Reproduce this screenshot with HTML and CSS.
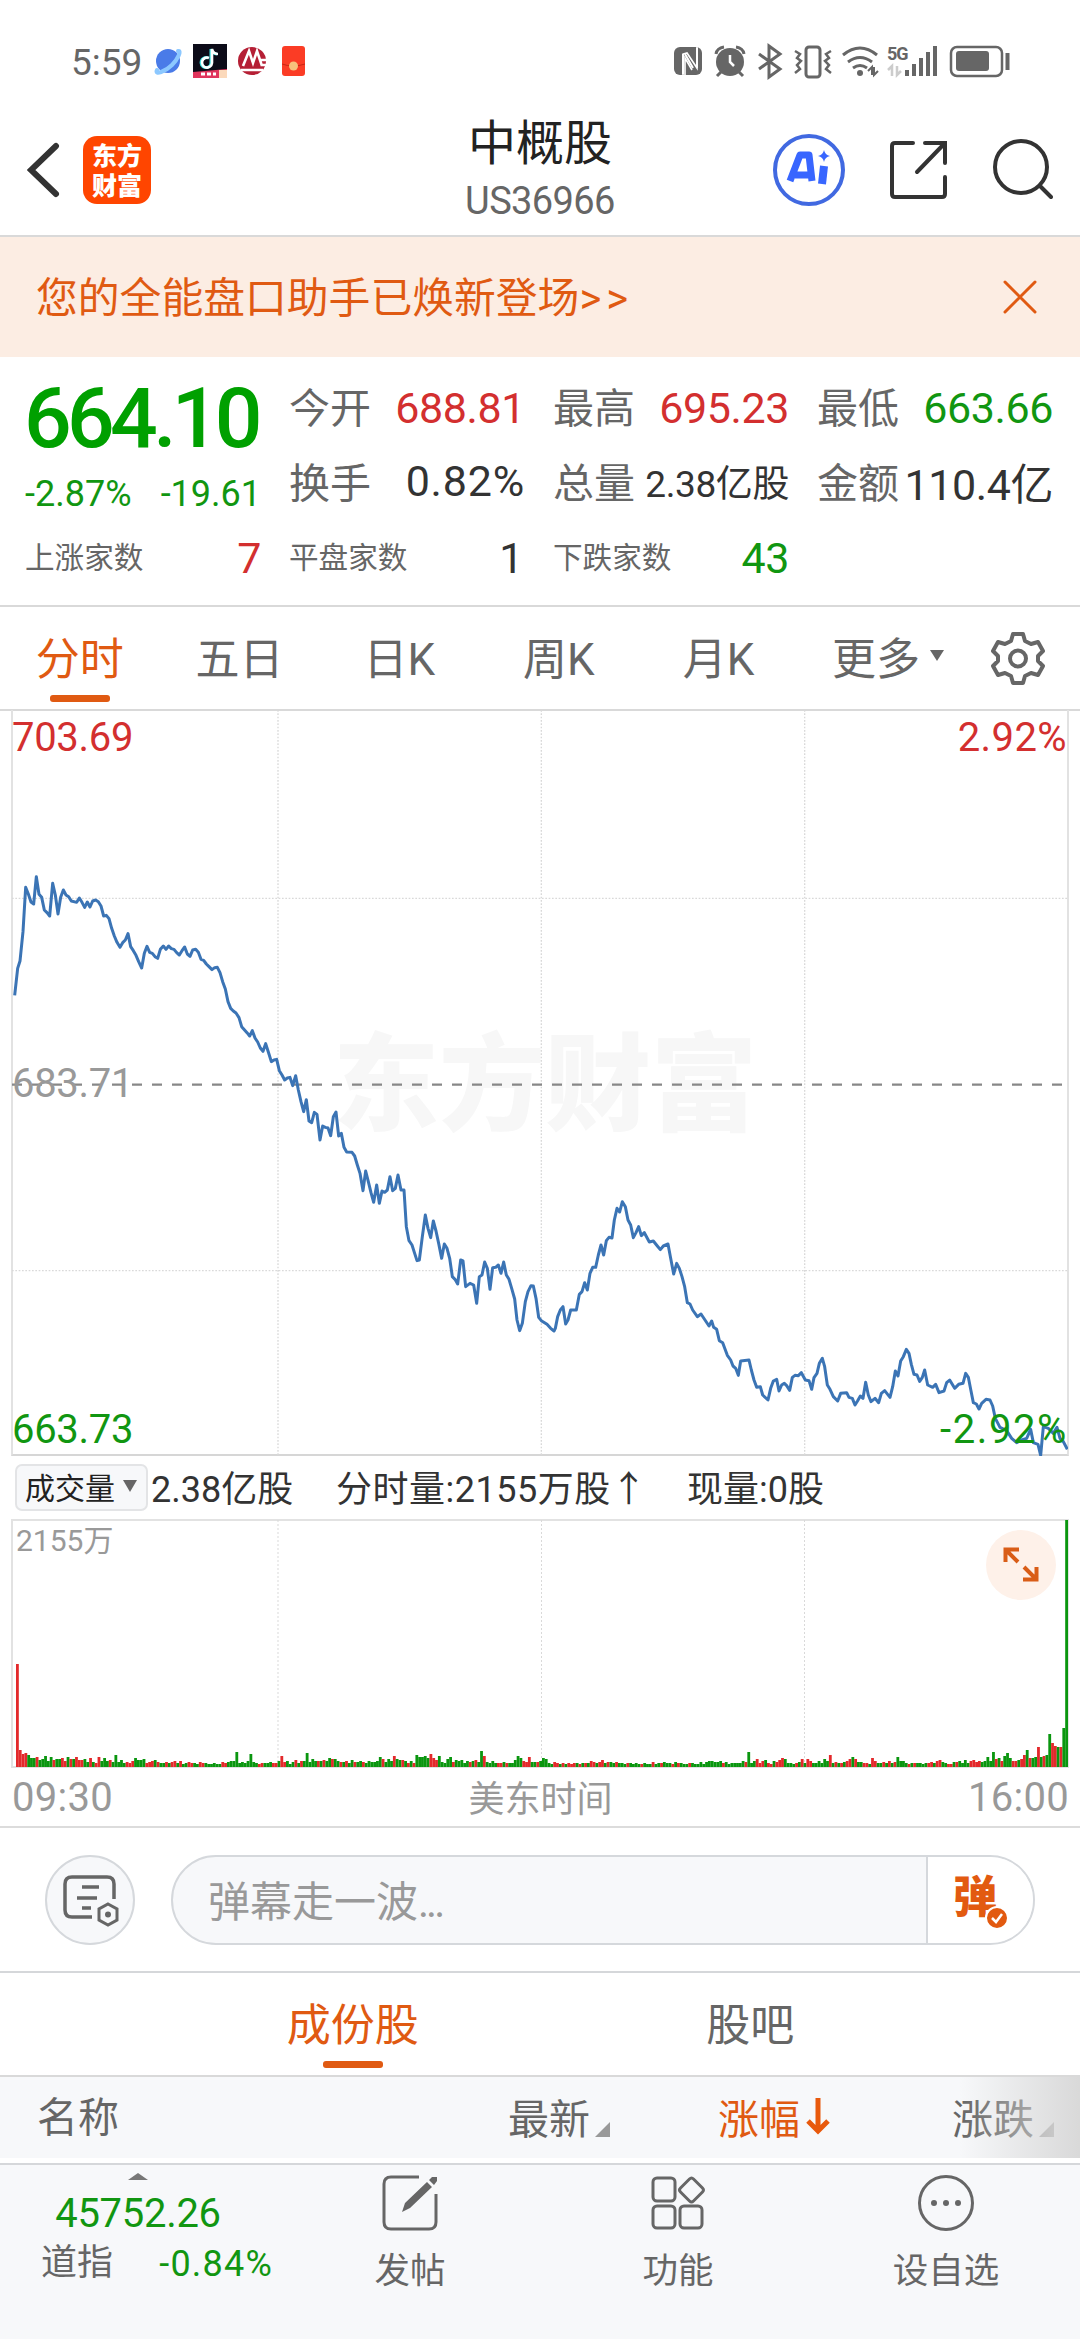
FILE: index.html
```
<!DOCTYPE html>
<html lang="zh-CN">
<head>
    <meta charset="UTF-8">
    <meta name="viewport" content="width=device-width, initial-scale=1.0">
    <title>中概股 US36966</title>
    <link rel="stylesheet" href="styles.css">
</head>
<body>
    <div class="status-bar">
        <span class="clock">5:59</span>
        <svg class="status-left" width="160" height="40" viewBox="150 42 160 40">
            <circle cx="168" cy="61" r="12" fill="#4a7be8"/>
            <path d="M157 70C154 76 166 71 172 65S182 50 178 51" fill="none" stroke="#8cc8ff" stroke-width="4" stroke-linecap="round"/>
            <rect x="193" y="44" width="34" height="34" fill="#0c0b18"/>
            <path d="M208 58a5 5 0 1 0 3 5V49c1 4 3 5 6 5" fill="none" stroke="#3de0e0" stroke-width="3"/>
            <path d="M209 58a5 5 0 1 0 3 5V49c1 4 3 5 6 5" fill="none" stroke="#fff" stroke-width="2.6"/>
            <path d="M193 72l34-3v9h-34z" fill="#e0345c"/>
            <path d="M219 70h8v8h-8z" fill="#fbd9bb"/>
            <path d="M201 74h15" stroke="#fff" stroke-width="3" stroke-dasharray="4 2"/>
            <circle cx="252" cy="61" r="14" fill="#b51f35"/>
            <path d="M243 66l6-15 4 12 4-12 5 15M241 70h22M260 60h6M261 65h5" fill="none" stroke="#fff" stroke-width="2.6"/>
            <rect x="282" y="46" width="23" height="30" rx="3" fill="#fb3c25"/>
            <path d="M282 64q11 4 23 0" fill="none" stroke="#c82512"/>
            <circle cx="293.500" cy="66" r="4.500" fill="#f7c27c"/>
        </svg>
        <svg class="status-right" width="340" height="40" viewBox="672 42 340 40">
            <rect x="674" y="47" width="28" height="28" rx="6" fill="#666"/>
            <path d="M683 75V54l4-1 10 15V47M692 70l-7-12v17" fill="none" stroke="#fff" stroke-width="1.600"/>
            <path d="M685 54l8 14M683 74V54M697 68V48" stroke="#fff" stroke-width="2"/>
            <circle cx="730" cy="62" r="14" fill="#666"/>
            <path d="M716 54q1-6 8-7M744 54q-1-6-8-7M721 72l-4 4M739 72l4 4" fill="none" stroke="#666" stroke-width="3"/>
            <path d="M730 55v7l4 4" fill="none" stroke="#fff" stroke-width="2.500"/>
            <path d="M759 54l21 15-11 8V46l11 8-21 15" fill="none" stroke="#666" stroke-width="3"/>
            <rect x="806" y="47" width="14" height="30" rx="3" fill="none" stroke="#666" stroke-width="3"/>
            <path d="M795 51l5 3-3 4 4 3-4 4 3 4-5 4M831 51l-5 3 3 4-4 3 4 4-3 4 5 4" fill="none" stroke="#666" stroke-width="2.500"/>
            <path d="M843 55q17-14 34 0M848 62q12-9 24 0M853 68q7-5 14 0" fill="none" stroke="#666" stroke-width="3"/>
            <circle cx="860" cy="73" r="3" fill="#666"/>
            <path d="M868 71l4-4v8M874 67v8l4-4" fill="none" stroke="#666" stroke-width="2"/>
            <text x="887" y="60" class="net">5G</text>
            <path d="M888 70l4-4v10M897 66v9l4-4" fill="none" stroke="#ccc" stroke-width="2.500"/>
            <path d="M907 70v6M914 64v12M921 58v18M928 52v24M935 46v30" stroke="#666" stroke-width="4" fill="none"/>
            <rect x="951" y="47" width="51" height="29" rx="6" fill="none" stroke="#666" stroke-width="2.500"/>
            <rect x="956" y="51" width="33" height="20" rx="3" fill="#666"/>
            <path d="M1007.500 53v17" stroke="#666" stroke-width="4"/>
        </svg>
    </div>

    <header class="nav">
        <svg class="back" width="34" height="60" viewBox="0 0 34 60"><path d="M29 6L4 30l25 24" fill="none" stroke="#333" stroke-width="6" stroke-linecap="round"/></svg>
        <div class="logo">东方<br>财富</div>
        <div class="title">
            <h1>中概股</h1>
            <p>US36966</p>
        </div>
        <div class="nav-icons">
            <svg width="72" height="74" viewBox="0 0 72 74">
                <circle cx="36" cy="37" r="34" fill="none" stroke="#4169e1" stroke-width="4"/>
                <path d="M17 48l10-26h9l3 26M22 42h15" fill="none" stroke="#3866ff" stroke-width="7" stroke-linejoin="round"/>
                <path d="M51 33l-2 18" stroke="#3866ff" stroke-width="8"/>
                <path d="M51 17q1 5 6 6-5 1-6 6-1-5-6-6 5-1 6-6z" fill="#3866ff"/>
            </svg>
            <svg width="60" height="62" viewBox="0 0 60 62"><path d="M24 4H6q-3 0-3 3v48q0 3 3 3h47q3 0 3-3V38M36 4h20v20M55 5L28 33" fill="none" stroke="#333" stroke-width="4" stroke-linecap="round"/></svg>
            <svg width="60" height="62" viewBox="0 0 60 62"><circle cx="28" cy="28" r="26" fill="none" stroke="#333" stroke-width="4"/><path d="M47 47l11 11" stroke="#333" stroke-width="4" stroke-linecap="round"/></svg>
        </div>
    </header>

    <div class="banner">
        <p>您的全能盘口助手已焕新登场<span>&gt;&gt;</span></p>
        <svg width="34" height="34" viewBox="0 0 34 34"><path d="M2 2l30 30M32 2L2 32" stroke="#e05a12" stroke-width="3" stroke-linecap="round"/></svg>
    </div>

    <section class="quote">
        <div class="price">
            <strong>664.10</strong>
            <div class="change"><span>-2.87%</span><span>-19.61</span></div>
        </div>
        <div class="cell"><label>今开</label><b class="up">688.81</b></div>
        <div class="cell"><label>最高</label><b class="up">695.23</b></div>
        <div class="cell"><label>最低</label><b class="down">663.66</b></div>
        <div class="cell"><label>换手</label><b class="wide">0.82%</b></div>
        <div class="cell"><label>总量</label><b class="tight">2.38亿股</b></div>
        <div class="cell"><label>金额</label><b>110.4亿</b></div>
        <div class="cell small"><label>上涨家数</label><b class="up">7</b></div>
        <div class="cell small"><label>平盘家数</label><b>1</b></div>
        <div class="cell small"><label>下跌家数</label><b class="down">43</b></div>
    </section>

    <nav class="periods">
        <a class="active">分时</a>
        <a>五日</a>
        <a>日K</a>
        <a>周K</a>
        <a>月K</a>
        <a class="more">更多<i></i></a>
        <svg width="54" height="54" viewBox="0 0 54 54"><path d="M22 3h10l2 7 6 3 7-2 5 9-5 5v5l5 5-5 9-7-2-6 3-2 7H22l-2-7-6-3-7 2-5-9 5-5v-5l-5-5 5-9 7 2 6-3z" fill="none" stroke="#666" stroke-width="4" stroke-linejoin="round"/><circle cx="27" cy="27.500" r="8" fill="none" stroke="#666" stroke-width="4"/></svg>
    </nav>

    <section class="chart">
        <div class="watermark">东方财富</div>
        <!-- three units per pixel -->
        <svg class="line" width="1056" height="746" viewBox="36 -390 3168 2238">
            <path class="grid" d="M834-390V1848M1624-390V1848M2414-390V1848M36 175H3204M36 1292H3204"/>
            <path d="M36 734H3204" stroke="#888" stroke-width="7" stroke-dasharray="30"/>
            <polyline class="trend" points="44,466 53,385 60,363 69,275 77,142 85,162 93,186 101,192 109,110 117,163 125,172 133,210 141,218 149,228 158,130 166,165 174,222 182,172 190,150 198,165 206,170 214,183 230,187 238,174 246,187 254,202 262,186 270,201 278,183 287,180 295,185 303,198 311,228 319,226 327,236 335,265 343,288 351,307 360,322 368,308 376,300 384,281 392,320 400,332 408,346 416,365 425,384 433,340 441,319 449,337 457,340 465,350 473,355 481,328 490,318 498,328 506,318 514,326 522,328 530,338 538,345 546,332 554,321 562,342 570,349 578,330 587,328 595,337 603,358 611,361 619,372 627,380 636,389 644,383 652,382 660,398 668,425 676,447 684,485 692,505 700,513 708,519 717,533 725,560 733,569 741,578 749,588 757,572 765,594 773,606 781,624 789,634 797,611 805,636 814,665 822,660 830,658 838,692 846,705 854,720 862,714 870,712 878,737 887,707 895,750 903,785 911,815 919,779 927,843 935,848 943,817 951,823 960,900 968,858 976,862 984,864 992,887 1000,830 1008,816 1016,888 1024,880 1032,922 1040,936 1056,937 1064,948 1072,975 1080,1000 1089,1052 1097,993 1105,1025 1113,1058 1121,1087 1130,1035 1138,1090 1146,1053 1154,1057 1162,1050 1170,1010 1178,1052 1186,1045 1194,1005
                1203,1050 1212,1050 1219,1160 1227,1202 1236,1215 1244,1240 1251,1262 1258,1260 1267,1190 1276,1125 1284,1165 1292,1193 1300,1143 1308,1173 1316,1210 1325,1255 1333,1212 1341,1225 1349,1255 1357,1310 1365,1318 1373,1332 1382,1260 1389,1263 1397,1340 1410,1330 1421,1335 1430,1390 1438,1310 1446,1305 1454,1266 1462,1285 1470,1348 1478,1283 1487,1282 1495,1275 1503,1300 1511,1266 1519,1305 1527,1318 1535,1345 1544,1377 1551,1440 1559,1472 1567,1450 1576,1385 1584,1355 1593,1337 1600,1338 1608,1375 1616,1432 1624,1442 1641,1453 1652,1465 1662,1473 1666,1465 1673,1430 1681,1410 1689,1400 1697,1452 1704,1440 1712,1410 1729,1410 1738,1363 1746,1355 1754,1328 1762,1350 1770,1300 1778,1282 1787,1282 1795,1245 1803,1215 1811,1245 1819,1202 1827,1192 1836,1194 1843,1140 1851,1105 1859,1116 1867,1085 1876,1100 1884,1140 1892,1155 1900,1193 1908,1178 1916,1160 1924,1187 1933,1178 1948,1206 1960,1203 1972,1218 1981,1229 1990,1218 2004,1212 2012,1255 2021,1302 2030,1270 2038,1285 2046,1310 2054,1340 2062,1388 2070,1392 2078,1410 2092,1430 2103,1422 2115,1440 2127,1458 2135,1443 2141,1462 2150,1468 2158,1502 2168,1508 2182,1546 2192,1560 2199,1578 2207,1585 2215,1606
                2222,1563 2247,1560 2254,1590 2262,1620 2270,1642 2281,1640 2288,1665 2304,1680 2312,1645 2320,1623 2330,1618 2337,1653 2345,1635 2353,1630 2360,1637 2369,1651 2377,1612 2385,1606 2395,1607 2404,1598 2416,1620 2427,1622 2435,1648 2442,1613 2451,1600 2458,1570 2467,1555 2474,1580 2482,1635 2490,1648 2500,1670 2513,1683 2522,1660 2540,1658 2547,1672 2557,1675 2565,1695 2573,1682 2581,1668 2589,1675 2597,1627 2605,1665 2613,1685 2625,1675 2636,1688 2644,1660 2654,1652 2670,1672 2678,1640 2686,1593 2694,1608 2702,1563 2710,1550 2719,1528 2727,1540 2734,1573 2742,1603 2751,1605 2759,1624 2767,1612 2774,1590 2783,1635 2798,1642 2807,1633 2817,1658 2832,1653 2840,1628 2849,1620 2864,1645 2876,1633 2889,1630 2897,1600 2905,1612 2912,1648 2920,1688 2929,1692 2937,1707 2945,1690 2958,1678 2970,1680 2978,1698 2986,1735 3000,1762 3020,1772 3035,1795 3050,1808 3065,1800 3080,1795 3092,1768 3100,1808 3114,1813 3122,1846 3130,1760 3145,1765 3160,1780 3171,1762 3180,1795 3190,1805 3202,1828"/>
        </svg>
        <span class="axis top-left up">703.69</span>
        <span class="axis top-right up">2.92%</span>
        <span class="axis mid-left">683.71</span>
        <span class="axis bottom-left down">663.73</span>
        <span class="axis bottom-right down">-2.92%</span>
    </section>

    <div class="volume-info">
        <button>成交量<i></i></button>
        <span class="total">2.38亿股</span>
        <span class="minute">分时量:2155万股↑</span>
        <span class="now">现量:0股</span>
    </div>

    <section class="volume">
        <svg width="1056" height="248" viewBox="0 0 1056 248">
            <path class="grid" d="M266 0V248M529.500 0V248M792.500 0V248"/>
            <g id="bars"></g>
        </svg>
        <span class="max">2155万</span>
        <div class="expand">
            <svg width="36" height="36" viewBox="0 0 36 36"><path d="M2.500 15V2.500H16M3 3l12 12M33.500 20v12.500H20M33 32L21 20" fill="none" stroke="#d95d17" stroke-width="4"/></svg>
        </div>
    </section>

    <div class="times"><span>09:30</span><em>美东时间</em><span>16:00</span></div>

    <div class="danmu">
        <div class="settings">
            <svg width="58" height="54" viewBox="0 0 58 54"><path d="M51 24V9q0-7-7-7H9Q2 2 2 9v26q0 7 7 7h20M19 12h17M14 23h20M19 33h9" fill="none" stroke="#666" stroke-width="3.500"/><path d="M45 29l9 5v11l-9 5-9-5V34z" fill="#f7f8fa" stroke="#666" stroke-width="3"/><circle cx="45" cy="39.500" r="3" fill="#666"/></svg>
        </div>
        <div class="field">
            <p>弹幕走一波<span>...</span></p>
            <div class="send">弹<svg width="24" height="24" viewBox="0 0 24 24"><circle cx="12" cy="12" r="11" fill="#e25a10" stroke="#fff" stroke-width="2"/><path d="M7 12l4 4 6-8" fill="none" stroke="#fff" stroke-width="2.500"/></svg></div>
        </div>
    </div>

    <nav class="sections">
        <a class="active">成份股</a>
        <a>股吧</a>
    </nav>

    <div class="table-head">
        <span class="name">名称</span>
        <span class="last">最新<i></i></span>
        <span class="percent">涨幅<svg width="24" height="38" viewBox="0 0 24 38"><path d="M12 1v33M2 24l10 10 10-10" fill="none" stroke="#e8590c" stroke-width="5"/></svg></span>
        <span class="diff">涨跌<i></i></span>
    </div>

    <footer>
        <div class="index">
            <i></i>
            <b>45752.26</b>
            <p><span>道指</span><em>-0.84%</em></p>
        </div>
        <div class="tool">
            <svg width="56" height="56" viewBox="0 0 56 56"><path d="M37 2H9Q2 2 2 9v38q0 7 7 7h38q7 0 7-7V19" fill="none" stroke="#666" stroke-width="3"/><path d="M20 37l3-9L45 7l5 5-22 21zM47 5l3-3 5 0 0 4-3 4z" fill="#666"/></svg>
            发帖
        </div>
        <div class="tool">
            <svg width="56" height="56" viewBox="0 0 56 56"><g fill="none" stroke="#666" stroke-width="3"><rect x="3" y="3" width="22" height="23" rx="4"/><rect x="3" y="31" width="22" height="22" rx="4"/><rect x="30" y="31" width="22" height="22" rx="4"/><path d="M39.500 4q2-2 4 0l9 9q2 2 0 4l-9 9q-2 2-4 0l-9-9q-2-2 0-4z"/></g></svg>
            功能
        </div>
        <div class="tool">
            <svg width="56" height="56" viewBox="0 0 56 56"><circle cx="28" cy="28" r="26.500" fill="none" stroke="#666" stroke-width="3"/><g fill="#666"><circle cx="16" cy="28" r="3"/><circle cx="28" cy="28" r="3"/><circle cx="40" cy="28" r="3"/></g></svg>
            设自选
        </div>
    </footer>

    <script src="volume.js"></script>
</body>
</html>
```
FILE: styles.css
```
body {
    width: 1080px;
    height: 2340px;
    margin: 0;
    overflow: hidden;
    background: #fff;
    color: #666;
    font-family: Roboto, "Noto Sans CJK SC", sans-serif;
}

* {
    box-sizing: border-box;
}

h1, p {
    margin: 0;
    font-weight: 400;
}

b, em, i {
    font-weight: 400;
    font-style: normal;
}

svg {
    display: block;
    flex: none;
}

.up {
    color: #d32f2f;
}

.down {
    color: #119611;
}

.status-bar {
    display: flex;
    align-items: center;
    height: 104px;
    padding: 20px 68px 0 71px;
}

.clock {
    width: 79px;
    font-size: 37px;
    white-space: nowrap;
}

.status-right {
    margin-left: auto;
}

.net {
    font-size: 18px;
    font-weight: 700;
    letter-spacing: -1px;
    fill: #666;
}

.nav {
    display: flex;
    align-items: center;
    height: 133px;
    padding: 0 27px;
    border-bottom: 2px solid #d9d9d9;
}

.logo {
    width: 68px;
    height: 68px;
    margin-left: 22px;
    padding-top: 3px;
    border-radius: 14px;
    background: #ff4500;
    color: #fff;
    font-family: "Noto Sans CJK SC", sans-serif;
    font-size: 25px;
    font-weight: 900;
    line-height: 30px;
    text-align: center;
}

.title {
    width: 240px;
    margin-left: 269px;
    text-align: center;
}

.title h1 {
    color: #222;
    font-size: 48px;
    line-height: 62px;
}

.title p {
    font-size: 38px;
    line-height: 52px;
    letter-spacing: -0.6px;
}

.nav-icons {
    display: flex;
    flex: 1;
    align-items: center;
    justify-content: flex-end;
    gap: 44px;
}

.banner {
    display: flex;
    align-items: center;
    justify-content: space-between;
    height: 120px;
    padding: 0 43px 0 36px;
    background: #fcede3;
    color: #e05a12;
    font-size: 41.800px;
}

.banner p {
    padding-bottom: 4px;
}

.banner span {
    letter-spacing: 5px;
}

.quote {
    display: grid;
    grid-template-columns: repeat(4, 236px);
    grid-template-rows: repeat(3, 75px);
    column-gap: 28px;
    height: 250px;
    padding: 13px 25px 0;
    border-bottom: 2px solid #d9d9d9;
}

.price {
    grid-row: 1 / 3;
    color: #00a000;
}

.price strong {
    display: block;
    margin-left: -1px;
    font-size: 84px;
    font-weight: 500;
    line-height: 98px;
    letter-spacing: -4.700px;
}

.change {
    display: flex;
    justify-content: space-between;
    color: #119611;
    font-size: 36px;
    line-height: 52px;
}

.cell {
    display: flex;
    align-items: center;
    justify-content: space-between;
    white-space: nowrap;
}

.cell label {
    padding-bottom: 5px;
    font-size: 41px;
}

.cell b {
    font-size: 43px;
    letter-spacing: -0.4px;
}

.cell b:not(.up):not(.down) {
    padding-bottom: 4px;
    color: #333;
}

.cell .wide {
    letter-spacing: 0.8px;
}

.cell .tight {
    font-size: 37px;
}

.small label {
    font-size: 29.600px;
}

.small b:not(.up):not(.down) {
    padding: 0 2px 0 0;
}

.periods {
    display: grid;
    grid-template-columns: repeat(5, 159.700px) 179px 1fr;
    align-items: center;
    height: 104px;
    border-bottom: 2px solid #d9d9d9;
    font-size: 44px;
}

.periods a,
.sections a {
    display: flex;
    flex-direction: column;
    align-items: center;
    justify-content: center;
    height: 100%;
    padding-bottom: 5px;
}

.periods .more {
    flex-direction: row;
    gap: 10px;
}

.more i {
    border: 7px solid transparent;
    border-top: 11px solid #666;
    border-bottom: 0;
}

.periods svg {
    margin-left: 14px;
}

.active {
    position: relative;
    color: #e05a12;
}

.active::after {
    content: "";
    position: absolute;
    bottom: 7px;
    width: 60px;
    height: 7px;
    border-radius: 3px;
    background: #e05a12;
}

.chart {
    position: relative;
    height: 746px;
    margin: 0 11px;
    border: 2px solid #e2e2e2;
    border-top: 0;
    border-bottom-color: #d6d6d6;
}

.chart .line {
    position: relative;
    margin: -1px 0 0 -1px;
}

.grid {
    fill: none;
    stroke: #d9d9d9;
    stroke-width: 1;
    stroke-dasharray: 2;
}

.chart .grid {
    stroke-width: 4;
    stroke-dasharray: 5;
}

.trend {
    fill: none;
    stroke: #3b74b5;
    stroke-width: 9;
    stroke-linejoin: round;
}

.watermark {
    position: absolute;
    top: 291px;
    left: 320px;
    color: #f7f7f7;
    font-family: "Noto Sans CJK SC", sans-serif;
    font-size: 106px;
    font-weight: 900;
    line-height: 150px;
}

.axis {
    position: absolute;
    font-size: 40px;
    line-height: 48px;
    letter-spacing: -0.3px;
}

.top-left {
    top: 4px;
    left: -1px;
}

.top-right {
    top: 4px;
    right: 0;
    letter-spacing: 0.4px;
}

.mid-left {
    top: 350px;
    left: -1px;
    color: #999;
}

.bottom-left {
    bottom: 0;
    left: -1px;
}

.bottom-right {
    right: -1px;
    bottom: 0;
    letter-spacing: 1.600px;
}

.volume-info {
    display: flex;
    align-items: center;
    height: 63px;
    padding-left: 15px;
    color: #333;
    font-size: 36px;
    white-space: nowrap;
}

.volume-info span {
    padding-bottom: 4px;
}

.volume-info button {
    display: flex;
    align-items: center;
    width: 133px;
    height: 47px;
    margin-right: 3px;
    padding: 0 0 4px 8px;
    border: 2px solid #e3e4e6;
    border-radius: 7px;
    background: #f7f8fa;
    color: #222;
    font-family: inherit;
    font-size: 30px;
}

.volume-info i {
    margin-left: 8px;
    border: 7px solid transparent;
    border-top: 12px solid #666;
    border-bottom: 0;
}

.total {
    width: 185px;
}

.minute {
    width: 351px;
    letter-spacing: 0.5px;
}

.volume {
    position: relative;
    height: 249px;
    margin: 0 11px;
    border: 2px solid #e2e2e2;
}

.volume svg {
    margin: -1px;
}

.max {
    position: absolute;
    top: 3px;
    left: 3px;
    color: #999;
    font-size: 30px;
    line-height: 34px;
}

.expand {
    position: absolute;
    top: 9px;
    right: 11px;
    display: flex;
    align-items: center;
    justify-content: center;
    width: 70px;
    height: 70px;
    border-radius: 50%;
    background: #fef1e9;
}

.times {
    display: flex;
    align-items: center;
    justify-content: space-between;
    height: 60px;
    padding: 0 11px 0 12px;
    border-bottom: 2px solid #dcdcdc;
    color: #999;
    font-size: 40px;
    letter-spacing: 0.3px;
}

.times em {
    padding-bottom: 3px;
    font-size: 36px;
    letter-spacing: 0;
}

.danmu {
    display: flex;
    align-items: center;
    gap: 36px;
    height: 145px;
    padding: 0 45px;
    border-bottom: 2px solid #d5d7da;
}

.settings {
    display: flex;
    align-items: center;
    justify-content: center;
    width: 90px;
    height: 90px;
    padding: 4px 0 0 3px;
    border: 2px solid #d5d8dc;
    border-radius: 50%;
    background: #f7f8fa;
}

.field {
    display: flex;
    align-items: center;
    justify-content: space-between;
    width: 864px;
    height: 90px;
    padding-left: 35px;
    overflow: hidden;
    border: 2px solid #d5d8dc;
    border-radius: 45px;
    background: #f7f8fa;
    color: #999;
    font-size: 42px;
}

.field p {
    padding-bottom: 3px;
}

.field span {
    letter-spacing: -3px;
}

.send {
    position: relative;
    width: 107px;
    height: 100%;
    padding-left: 25px;
    border-left: 2px solid #d5d8dc;
    background: #fff;
    color: #e25a10;
    font-size: 44px;
    font-weight: 900;
    line-height: 82px;
}

.send svg {
    position: absolute;
    top: 49px;
    left: 57px;
}

.sections {
    display: flex;
    height: 104px;
    padding: 0 131px 0 154px;
    border-bottom: 2px solid #d9d9d9;
    font-size: 44px;
}

.sections a {
    flex: 1;
}

.table-head {
    position: relative;
    display: grid;
    grid-template-columns: 471px 210px 234px 1fr;
    align-items: center;
    height: 81px;
    padding: 0 0 4px 37px;
    background: #f7f8fa;
    font-size: 41px;
    white-space: nowrap;
}

.table-head::after {
    content: "";
    position: absolute;
    top: 0;
    right: 0;
    width: 120px;
    height: 100%;
    background: linear-gradient(to right, rgba(247, 248, 250, 0), rgba(215, 215, 215, 0.95));
}

.table-head span {
    display: flex;
    align-items: center;
}

.table-head .name {
    padding-bottom: 3px;
}

.table-head i {
    align-self: flex-end;
    margin: 0 0 9px 5px;
    border-left: 15px solid transparent;
    border-bottom: 15px solid #999;
}

.table-head .percent {
    gap: 6px;
    color: #e05a12;
}

footer {
    display: flex;
    height: 176px;
    margin-top: 5px;
    border-top: 2px solid #d5d7da;
    background: #f7f8fa;
}

.index {
    display: flex;
    flex-direction: column;
    align-items: center;
    width: 276px;
    color: #119611;
}

.index i {
    margin-top: 8px;
    border: 10px solid transparent;
    border-top: 0;
    border-bottom: 7px solid #777;
}

.index b {
    margin-top: 10px;
    font-size: 40px;
    line-height: 48px;
    letter-spacing: -0.3px;
}

.index p {
    display: flex;
    justify-content: space-between;
    width: 276px;
    padding: 0 3px 0 41px;
    font-size: 36px;
    line-height: 50px;
}

.index em {
    padding-top: 1px;
    letter-spacing: 1.200px;
}

.index p span {
    color: #666;
}

.tool {
    display: flex;
    flex-direction: column;
    align-items: center;
    gap: 14px;
    width: 268px;
    padding-top: 10px;
    font-size: 35.500px;
    line-height: 52px;
}
```
FILE: volume.js
```
// One entry per minute: r = up, g = down, number = bar height in px
const minutes = `
r103 r17 r13 r14 g12 g9 g9 r10 g7 g8 g11 g6 g10 r7 g8 g8 r9 r6 g10 r8 g8 r10 r7 r7 g8 g5 r9 g5 r4 r10
g6 g9 g6 r7 g5 g12 g5 g7 g4 r5 r4 r6 g9 g7 g7 g8 r4 r5 r6 g7 r5 g4 g4 r5 g4 r5 r6 g4 r6 g3
g4 r5 r4 g4 g3 r5 r4 g4 g3 g3 g4 g3 g3 r5 r4 g5 g6 g6 g15 g4 g5 g4 g6 g13 g5 g4 r3 r4 g4
g4 g5 r4 r4 g6 r11 r5 g6 g3 g5 r7 g4 r6 g6 g14 g5 g8 g6 r6 g6 r7 g6 g9 r8 g8 g6 r5 g5 r6 g4
g7 r5 g5 g6 r5 g4 g6 g5 g5 g6 g10 r8 g5 g8 g6 r11 g8 g7 r7 g6 r4 g6 r4 g12 g10 g10 g11
g9 r13 r9 r7 g11 g5 g4 g8 g10 r5 g7 g6 g7 g4 g6 r5 g6 r7 g5 g16 r11 g5 g4 g6 g4 r4 r4 g5 r4 g4
g4 g7 g11 g9 r6 r5 r10 g5 g5 r5 g6 g9 g8 g4 g3 r5 r4 g3 r4 g3 r4 r3 r4 g4 r3 g4 r4 g4 r6 r5
g4 r5 r7 g4 r5 g5 g4 r5 g4 g4 g3 r4 g4 g3 g4 g3 r3 g4 g3 g3 r5 g3 g4 r4 g5 g4 g4 r3 g5 r4
g4 g3 g3 r4 g4 g3 g3 g5 g3 g5 g6 g6 g5 g5 g6 r4 g5 g3 g4 g4 g4 g4 g6 r5 g15 g4 g6 r8 r4 r6 g7
r4 r3 g6 r5 r7 r9 g8 g4 g4 g3 r4 g5 r8 g4 r8 r6 g4 g4 g6 g4 g8 g6 r12 g4 r5 g4 r4 g5 r6 r8
g10 r8 g5 g5 r4 r4 g3 r9 r6 g4 g4 r5 g4 r6 g4 r5 g10 g6 g6 g4 r3 g4 r4 g4 g4 g3 g4 r4 r5 g4
r6 r7 g5 g4 r3 r3 g5 r5 g6 g4 g7 g4 r6 r7 r5 r6 g5 g6 g10 g6 g15 r8 g9 r6 g11 g14 g9 r6 r6 g7
r8 r12 g17 r9 g9 g10 r20 g10 r11 g12 g33 r24 r21 g20 r20 g39 g247
`.trim().split(/\s+/);

const step = 1052 / minutes.length;
document.getElementById("bars").innerHTML = minutes.map((item, i) => {
    const height = Number(item.slice(1));
    const color = item[0] === "r" ? "#e3292b" : "#0a960f";
    return `<rect x="${(4 + i * step).toFixed(2)}" y="${247 - height}" width="${step.toFixed(2)}" height="${height}" fill="${color}"/>`;
}).join("");
```
